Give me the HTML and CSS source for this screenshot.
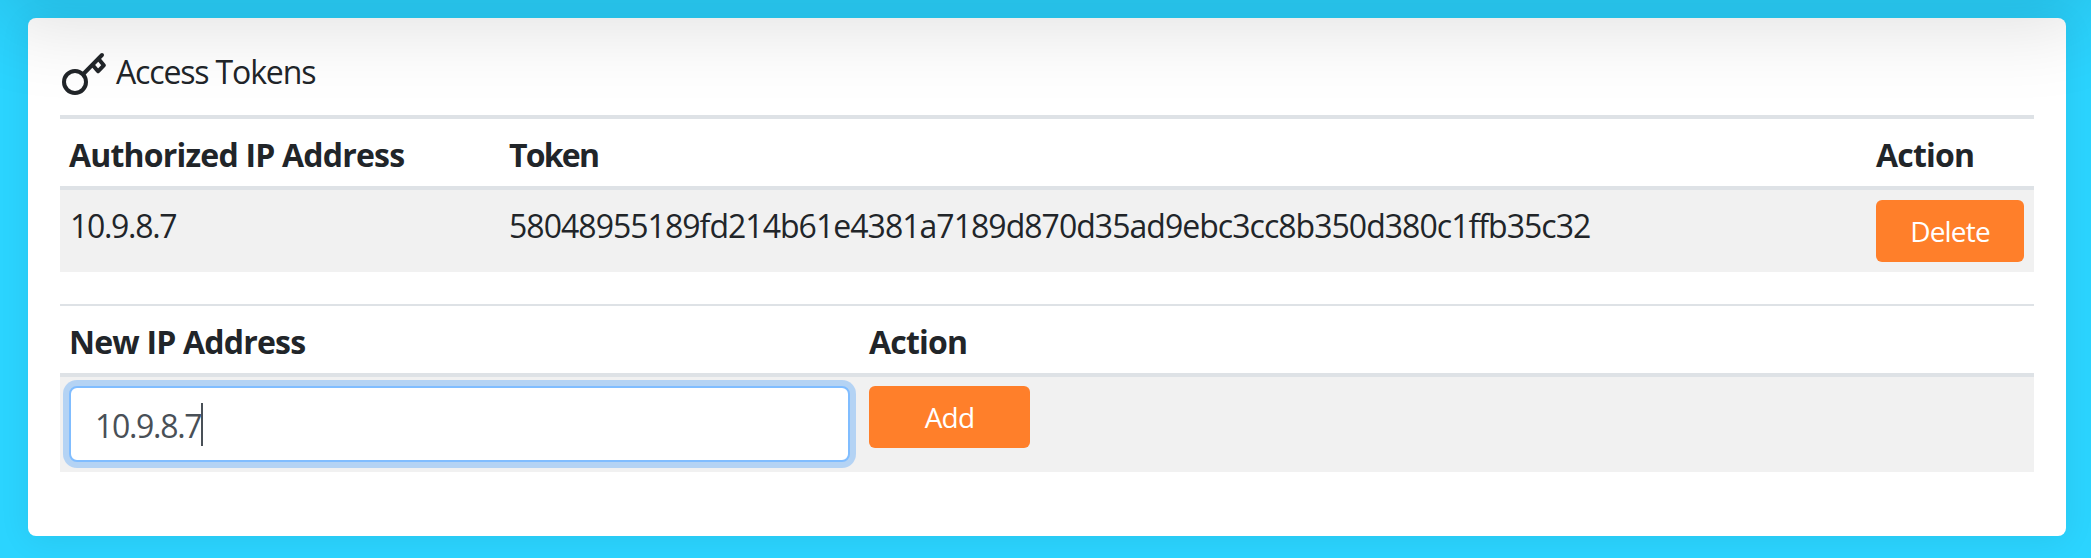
FILE: index.html
```html
<!DOCTYPE html>
<html lang="en">
<head>
<meta charset="utf-8">
<title>Access Tokens</title>
<link rel="stylesheet" href="styles.css">
</head>
<body>
<main class="card">
  <h1 class="title">
    <svg class="key" viewBox="0 0 44 44" fill="none" stroke="currentColor" stroke-width="4" stroke-linecap="round" stroke-linejoin="round">
      <circle cx="13" cy="30" r="11"/>
      <path d="M21.3 22 L40 3"/>
      <path d="M31 13.5 L36 19.3 L41.8 13.3 L37 7.5"/>
    </svg>
    <span class="title-text">Access Tokens</span>
  </h1>
  <section class="table tokens">
    <div class="row head"><b class="w-auth">Authorized IP Address</b><b class="w-token">Token</b><b class="w-action">Action</b></div>
    <div class="row body"><span class="ip">10.9.8.7</span><span class="hash">58048955189fd214b61e4381a7189d870d35ad9ebc3cc8b350d380c1ffb35c32</span><button class="btn">Delete</button></div>
  </section>
  <section class="table add">
    <div class="row head"><b class="w-new">New IP Address</b><b class="w-action">Action</b></div>
    <div class="row body"><div class="field"><span class="ip">10.9.8.7</span><i class="caret"></i></div><button class="btn">Add</button></div>
  </section>
</main>
<div class="top-shade"></div>
</body>
</html>
```
FILE: styles.css
```css
* { box-sizing: border-box; }
body {
  margin: 0;
  height: 558px;
  padding: 18px 25px 22px 28px;
  overflow: hidden;
  background: #2bd4ff;
  color: #212529;
  font: 32px/48px "Open Sans", "Noto Sans", sans-serif;
}
.card {
  height: 518px;
  padding: 24px 32px;
  background: #fff;
  border-radius: 8px;
  box-shadow: 0 4px 32px rgba(0, 0, 0, .07);
}
.title {
  display: flex;
  height: 73px;
  margin: 0;
  gap: 10px;
  font-size: 32px;
  font-weight: 400;
  line-height: 60px;
  letter-spacing: -1.15px;
}
.key { width: 44px; height: 44px; margin: 10px 0 0 2px; }
.row { display: grid; padding: 0 10px; }
.head { border-bottom: 4px solid #dee2e6; align-items: center; letter-spacing: -.8px; }
.head b { padding-top: 4px; }
.w-auth { margin-left: -1px; }
.w-token { margin-left: -1px; letter-spacing: -1.8px; }
.body { background: #f1f1f1; align-items: start; }
.tokens .row { grid-template-columns: 440px 1366px 148px; }
.tokens .head { height: 75px; border-top: 4px solid #dee2e6; }
.tokens .body { height: 82px; padding-top: 10px; }
.add { margin-top: 32px; }
.add .row { grid-template-columns: 781px 161px; column-gap: 19px; padding-left: 9px; }
.add .head { height: 73px; border-top: 2px solid #dee2e6; }
.add .body { height: 95px; padding-top: 9px; }
.tokens .ip, .hash { padding-top: 2px; }
.ip { letter-spacing: -1.3px; }
.hash { margin-left: -1px; letter-spacing: -.97px; }
.btn {
  height: 62px;
  border: 0;
  border-radius: 6px;
  background: #ff7f2a;
  color: #fff;
  font: 28px/62px "Open Sans", "Noto Sans", sans-serif;
  letter-spacing: -.8px;
  padding: 0;
}
.field {
  display: flex;
  align-items: center;
  height: 76px;
  padding-left: 24px;
  background: #fff;
  border: 2px solid #80bdff;
  border-radius: 8px;
  box-shadow: 0 0 0 6px rgba(0, 123, 255, .25);
  color: #495057;
}
.field .ip { padding-top: 4px; }
.caret { width: 2px; height: 43px; background: #495057; }
.top-shade {
  position: absolute;
  left: 0;
  right: 0;
  top: -206px;
  height: 200px;
  box-shadow: 0 32px 80px rgba(0, 0, 0, .125);
  pointer-events: none;
}
```
